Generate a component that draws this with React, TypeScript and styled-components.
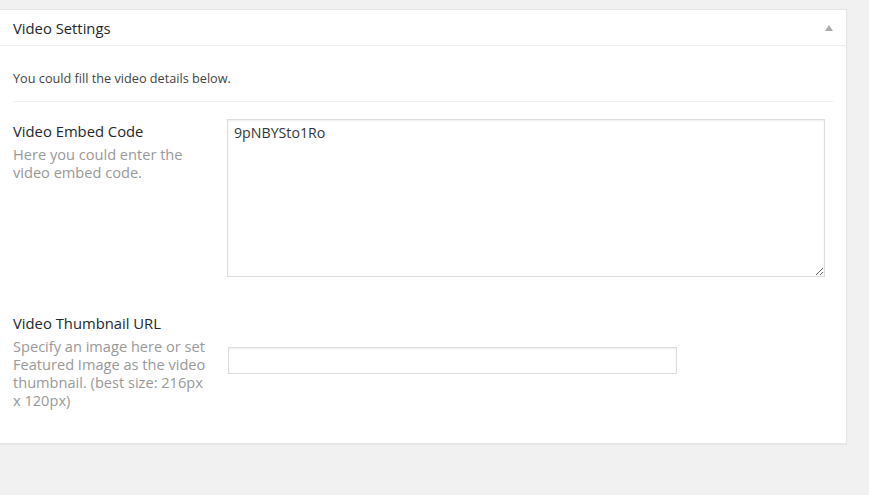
import React from "react";
import styled, { createGlobalStyle } from "styled-components";

const GlobalStyle = createGlobalStyle`
  body {
    margin: 0;
    background: #f1f1f1;
    font-family: "Open Sans", "Noto Sans", sans-serif;
    color: #444;
  }
`;

const Page = styled.div`
  padding-top: 9px;
  min-height: 486px;
`;

const Postbox = styled.div`
  width: 848px;
  margin-left: -1px;
  background: #fff;
  border: 1px solid #e5e5e5;
  box-shadow: 0 1px 1px rgba(0, 0, 0, 0.04);
  box-sizing: border-box;
`;

const Header = styled.div`
  height: 35px;
  display: flex;
  align-items: center;
  justify-content: space-between;
  padding: 0 13px 0 13px;
  border-bottom: 1px solid #eee;
`;

const Title = styled.h2`
  margin: 0;
  font-size: 14.8px;
  font-weight: 400;
  color: #23282d;
`;

const Toggle = styled.span`
  width: 0;
  height: 0;
  border-left: 4px solid transparent;
  border-right: 4px solid transparent;
  border-bottom: 6px solid #aaa;
`;

const Inside = styled.div`
  padding: 0 12px 0 13px;
`;

const Intro = styled.p`
  margin: 0 1px 0 0;
  padding: 23px 0 14px;
  font-size: 12.7px;
  line-height: 18px;
  color: #444;
  border-bottom: 1px solid #eee;
`;

const Fields = styled.div`
  padding: 17px 0 33px;
  display: flex;
  flex-direction: column;
  gap: 34px;
`;

const Row = styled.div<{ $center?: boolean }>`
  display: grid;
  grid-template-columns: 214px 1fr;
  align-items: ${(p) => (p.$center ? "center" : "start")};
`;

const LabelCell = styled.div`
  padding: 3px 0 1px;
`;

const Label = styled.label`
  display: block;
  font-size: 14.8px;
  line-height: 18px;
  font-weight: 400;
  color: #23282d;
  margin-bottom: 5px;
`;

const Description = styled.p`
  margin: 0;
  width: 200px;
  font-size: 14.6px;
  line-height: 18px;
  color: #999;
`;

const TextArea = styled.textarea`
  width: 598px;
  height: 158px;
  box-sizing: border-box;
  border: 1px solid #ddd;
  box-shadow: inset 0 1px 2px rgba(0, 0, 0, 0.07);
  padding: 4px 6px;
  font-family: "Open Sans", "Noto Sans", sans-serif;
  font-size: 14.2px;
  line-height: 18px;
  color: #32373c;
  outline: none;
  margin: 0;
`;

const TextInput = styled.input`
  width: 449px;
  height: 27px;
  box-sizing: border-box;
  border: 1px solid #ddd;
  box-shadow: inset 0 1px 2px rgba(0, 0, 0, 0.07);
  padding: 3px 5px;
  font-family: "Open Sans", "Noto Sans", sans-serif;
  font-size: 14px;
  outline: none;
  margin: 0 0 0 1px;
`;

const App = () => {
  return (
    <Page>
      <GlobalStyle />
      <Postbox>
        <Header>
          <Title>Video Settings</Title>
          <Toggle />
        </Header>
        <Inside>
          <Intro>You could fill the video details below.</Intro>
          <Fields>
            <Row>
              <LabelCell>
                <Label>Video Embed Code</Label>
                <Description>Here you could enter the video embed code.</Description>
              </LabelCell>
              <TextArea defaultValue="9pNBYSto1Ro" />
            </Row>
            <Row $center>
              <LabelCell>
                <Label>Video Thumbnail URL</Label>
                <Description>
                  Specify an image here or set Featured Image as the video
                  thumbnail. (best size: 216px x 120px)
                </Description>
              </LabelCell>
              <TextInput type="text" />
            </Row>
          </Fields>
        </Inside>
      </Postbox>
    </Page>
  );
};

export default App;
